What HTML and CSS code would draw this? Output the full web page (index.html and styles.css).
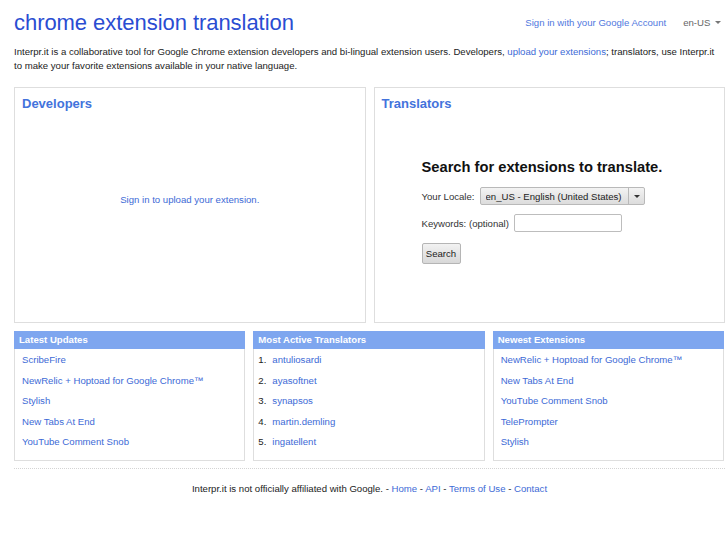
FILE: index.html
```html
<!DOCTYPE html>
<html lang="en">
<head>
  <meta charset="UTF-8">
  <title>Interpr.it - chrome extension translation</title>
  <link rel="stylesheet" href="styles.css">
</head>
<body>
  <div class="page">
    <div class="top">
      <h1 class="title">chrome extension translation</h1>
      <div class="account">
        <a href="#">Sign in with your Google Account</a>
        <span class="locale">en-US <span class="caret"></span></span>
      </div>
    </div>

    <p class="intro">Interpr.it is a collaborative tool for Google Chrome extension developers and bi-lingual extension users. Developers, <a href="#">upload your extensions</a>; translators, use Interpr.it to make your favorite extensions available in your native language.</p>

    <div class="panels">
      <div class="panel">
        <h2>Developers</h2>
        <div class="dev-body">
          <a href="#">Sign in to upload your extension.</a>
        </div>
      </div>
      <div class="panel">
        <h2>Translators</h2>
        <form class="search">
          <h3>Search for extensions to translate.</h3>
          <div class="row">
            <label>Your Locale:</label>
            <span class="select-wrap">
              <select>
                <option>en_US - English (United States)</option>
              </select>
            </span>
          </div>
          <div class="row">
            <label>Keywords: (optional)</label>
            <input type="text" class="keywords" />
          </div>
          <div class="row">
            <button type="button" class="btn">Search</button>
          </div>
        </form>
      </div>
    </div>

    <div class="lists">
      <div class="list-box">
        <div class="list-head">Latest Updates</div>
        <ul>
          <li><a href="#">ScribeFire</a></li>
          <li><a href="#">NewRelic + Hoptoad for Google Chrome™</a></li>
          <li><a href="#">Stylish</a></li>
          <li><a href="#">New Tabs At End</a></li>
          <li><a href="#">YouTube Comment Snob</a></li>
        </ul>
      </div>
      <div class="list-box">
        <div class="list-head">Most Active Translators</div>
        <ol>
          <li><span class="num">1.</span><a href="#">antuliosardi</a></li>
          <li><span class="num">2.</span><a href="#">ayasoftnet</a></li>
          <li><span class="num">3.</span><a href="#">synapsos</a></li>
          <li><span class="num">4.</span><a href="#">martin.demling</a></li>
          <li><span class="num">5.</span><a href="#">ingatellent</a></li>
        </ol>
      </div>
      <div class="list-box">
        <div class="list-head">Newest Extensions</div>
        <ul>
          <li><a href="#">NewRelic + Hoptoad for Google Chrome™</a></li>
          <li><a href="#">New Tabs At End</a></li>
          <li><a href="#">YouTube Comment Snob</a></li>
          <li><a href="#">TelePrompter</a></li>
          <li><a href="#">Stylish</a></li>
        </ul>
      </div>
    </div>

    <div class="footer">
      Interpr.it is not officially affiliated with Google. -
      <a href="#">Home</a> -
      <a href="#">API</a> -
      <a href="#">Terms of Use</a> -
      <a href="#">Contact</a>
    </div>
  </div>
</body>
</html>
```

FILE: styles.css
```css
* {
  box-sizing: border-box;
}

html, body {
  margin: 0;
  padding: 0;
  background: #fff;
}

body {
  font-family: "Liberation Sans", Arial, sans-serif;
  font-size: 9.6px;
  color: #222;
}

a {
  color: #3d6ad6;
  text-decoration: none;
}

.page {
  width: 711px;
  margin-left: 14px;
}

.top {
  display: flex;
  justify-content: space-between;
  align-items: center;
  padding-top: 10px;
}

.title {
  margin: 0;
  font-size: 22px;
  line-height: 26px;
  font-weight: normal;
  color: #2a4dd2;
  letter-spacing: -0.05px;
}

.account {
  display: flex;
  align-items: center;
  padding-right: 4px;
  margin-top: -2px;
}

.account a {
  color: #5078de;
}

.locale {
  margin-left: 17px;
  color: #666;
}

.caret {
  display: inline-block;
  width: 0;
  height: 0;
  border-left: 3px solid transparent;
  border-right: 3px solid transparent;
  border-top: 3px solid #777;
  vertical-align: middle;
  margin-left: 2px;
}

.intro {
  margin: 9px 0 14px;
  padding-right: 8px;
  line-height: 14px;
}

.panels {
  display: flex;
  gap: 8px;
}

.panel {
  flex: 1;
  height: 236px;
  border: 1px solid #dedede;
  padding: 0 7px;
}

.panel h2 {
  margin: 8px 0 0;
  font-size: 13px;
  line-height: 15px;
  color: #4373dc;
}

.dev-body {
  margin-top: 82px;
  text-align: center;
  line-height: 14px;
}

.search {
  padding-left: 40px;
}

.search h3 {
  margin: 47px 0 11px;
  font-size: 14.7px;
  line-height: 18px;
  color: #111;
}

.row {
  display: flex;
  align-items: center;
  height: 18px;
  margin-bottom: 9px;
}

.row label {
  margin-right: 5px;
  color: #333;
}

.select-wrap {
  position: relative;
  display: inline-block;
}

.select-wrap select {
  appearance: none;
  -webkit-appearance: none;
  width: 165px;
  height: 18px;
  padding: 0 0 0 5px;
  font-family: inherit;
  font-size: 9.6px;
  color: #222;
  border: 1px solid #b9b9b9;
  border-radius: 2px;
  background: linear-gradient(#f3f3f3, #dcdcdc);
}

.select-wrap::after {
  content: "";
  position: absolute;
  right: 0;
  top: 0;
  width: 16px;
  height: 18px;
  border-left: 1px solid #b9b9b9;
  pointer-events: none;
}

.select-wrap::before {
  content: "";
  position: absolute;
  right: 5px;
  top: 8px;
  border-left: 3px solid transparent;
  border-right: 3px solid transparent;
  border-top: 3px solid #333;
  pointer-events: none;
}

.keywords {
  width: 108px;
  height: 18px;
  border: 1px solid #bdbdbd;
  border-radius: 2px;
  padding: 0 3px;
  font-family: inherit;
  font-size: 9.6px;
}

.btn {
  margin-top: 6px;
  height: 21px;
  width: 39px;
  padding: 0;
  font-family: inherit;
  font-size: 9.6px;
  color: #222;
  border: 1px solid #b5b5b5;
  border-radius: 2px;
  background: linear-gradient(#f2f2f2, #d8d8d8);
}

.lists {
  display: flex;
  gap: 8px;
  margin-top: 8px;
  padding-right: 1px;
}

.list-box {
  flex: 1;
  height: 130px;
  border: 1px solid #dedede;
  border-top: none;
}

.list-head {
  height: 18px;
  line-height: 18px;
  margin: 0 -1px;
  padding-left: 5px;
  background: #7ea6ef;
  color: #fff;
  font-weight: bold;
}

.list-box ul,
.list-box ol {
  list-style: none;
  margin: 0;
  padding: 0 0 0 7px;
}

.list-box li {
  height: 20.5px;
  line-height: 20.5px;
  white-space: nowrap;
}

.list-box li:first-child {
  margin-top: 1px;
}

.num {
  display: inline-block;
  width: 14px;
  color: #222;
  margin-left: -3px;
}

.footer {
  margin-top: 7px;
  border-top: 1px dotted #d4d4d4;
  padding-top: 13px;
  text-align: center;
  line-height: 14px;
  color: #222;
}
```
